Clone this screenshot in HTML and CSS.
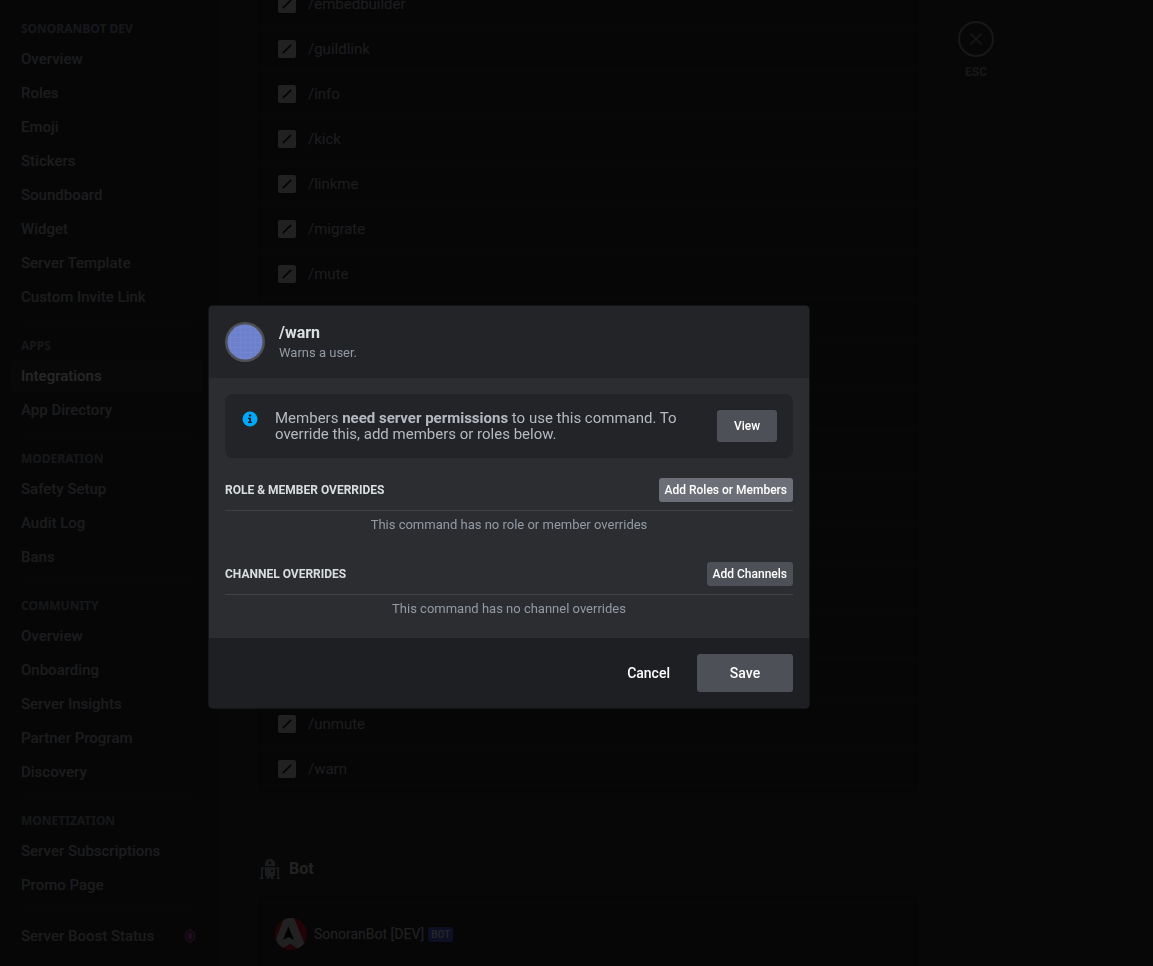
FILE: index.html
```html
<!DOCTYPE html>
<html lang="en">
<head>
<meta charset="utf-8">
<title>Server Settings</title>
<link rel="stylesheet" href="styles.css">
</head>
<body>
<svg class="sprite" aria-hidden="true">
  <symbol id="slash" viewBox="0 0 18 18">
    <rect width="18" height="18" rx="2" fill="#dbdee1"/>
    <path d="M4.8 13.2 13.2 4.8" stroke="#1e1f22" stroke-width="1.8"/>
  </symbol>
</svg>
<div class="app">
  <nav class="sidebar" aria-label="Server settings">
    <h2>SonoranBot Dev</h2>
    <ul>
      <li><a href="#">Overview</a></li>
      <li><a href="#">Roles</a></li>
      <li><a href="#">Emoji</a></li>
      <li><a href="#">Stickers</a></li>
      <li><a href="#">Soundboard</a></li>
      <li><a href="#">Widget</a></li>
      <li><a href="#">Server Template</a></li>
      <li><a href="#">Custom Invite Link</a></li>
    </ul>
    <hr>
    <h2>Apps</h2>
    <ul>
      <li><a href="#" class="active" aria-current="page">Integrations</a></li>
      <li><a href="#">App Directory</a></li>
    </ul>
    <hr>
    <h2>Moderation</h2>
    <ul>
      <li><a href="#">Safety Setup</a></li>
      <li><a href="#">Audit Log</a></li>
      <li><a href="#">Bans</a></li>
    </ul>
    <hr>
    <h2>Community</h2>
    <ul>
      <li><a href="#">Overview</a></li>
      <li><a href="#">Onboarding</a></li>
      <li><a href="#">Server Insights</a></li>
      <li><a href="#">Partner Program</a></li>
      <li><a href="#">Discovery</a></li>
    </ul>
    <hr>
    <h2>Monetization</h2>
    <ul>
      <li><a href="#">Server Subscriptions</a></li>
      <li><a href="#">Promo Page</a></li>
    </ul>
    <hr class="tight">
    <ul>
      <li><a href="#">Server Boost Status
        <svg width="10" height="14" viewBox="0 0 10 14" aria-hidden="true"><path d="M5 .8 9.3 4v6L5 13.2.7 10V4Z" fill="none" stroke="#e05ad8" stroke-width="1.1"/><path d="M5 3.2 7.5 5v4L5 10.8 2.5 9V5Z" fill="#e05ad8"/></svg>
      </a></li>
    </ul>
  </nav>
  <main class="content">
    <div class="column">
      <ul class="card commands">
        <li><svg><use href="#slash"/></svg>/embedbuilder</li>
        <li><svg><use href="#slash"/></svg>/guildlink</li>
        <li><svg><use href="#slash"/></svg>/info</li>
        <li><svg><use href="#slash"/></svg>/kick</li>
        <li><svg><use href="#slash"/></svg>/linkme</li>
        <li><svg><use href="#slash"/></svg>/migrate</li>
        <li><svg><use href="#slash"/></svg>/mute</li>
        <li></li><li></li><li></li><li></li><li></li><li></li><li></li><li></li><li></li>
        <li><svg><use href="#slash"/></svg>/unmute</li>
        <li><svg><use href="#slash"/></svg>/warn</li>
      </ul>
      <h3 class="section-title">
        <svg width="22" height="20" viewBox="0 0 22 20" aria-hidden="true" fill="#b5bac1"><path fill-rule="evenodd" d="M6 7V5a5 5 0 0 1 10 0v2ZM11 2.300a1.500 1.500 0 1 0 0 3 1.500 1.500 0 0 0 0-3Z"/><path fill-rule="evenodd" d="M6 8.200h10V17h-2v1l1 2H11.800v-2h-1.600v2H7l1-2v-1H6ZM12 11v2h2v-2Z"/><path d="M2 8.200h3.500v1.700H3.700V18L5 20H0l2-2ZM20 8.200h-3.500v1.700h1.800V18L17 20h5l-2-2Z"/></svg>
        Bot
      </h3>
      <div class="card bot">
        <svg width="32" height="32" viewBox="0 0 32 32" aria-hidden="true"><defs><clipPath id="disc"><circle cx="16" cy="16" r="16"/></clipPath></defs><g clip-path="url(#disc)"><rect width="32" height="32" fill="#e01c2c"/><path d="M9 0h10l11 27-5 5-9.500-6L6 31 0 24Z" fill="#dbdee1"/><path d="m13.500 8.500 5.500 13.500-5.500-3-5.500 2.700Z" fill="#111"/><path d="m15 26 9 6H6Z" fill="#e01c2c"/></g></svg>
        <span class="bot-name">SonoranBot [DEV]</span>
        <span class="tag">BOT</span>
      </div>
    </div>
    <div class="close">
      <button type="button" aria-labelledby="esc"><svg width="14" height="14" viewBox="0 0 14 14" aria-hidden="true"><path d="m1.500 1.500 11 11m0-11-11 11" stroke="#949ba4" stroke-width="1.600"/></svg></button>
      <span id="esc">ESC</span>
    </div>
  </main>
</div>
<div class="backdrop">
  <section class="modal" role="dialog" aria-modal="true" aria-labelledby="title">
    <header>
      <svg width="40" height="40" viewBox="0 0 40 40" aria-hidden="true"><defs><pattern id="grid" width="5" height="5" patternUnits="userSpaceOnUse"><path d="M0 .5h5M.5 0v5" stroke="#7b8dd8"/></pattern></defs><circle cx="20" cy="20" r="20" fill="#4e5056"/><circle cx="20" cy="20" r="17.500" fill="#6c80cb"/><circle cx="20" cy="20" r="17.500" fill="url(#grid)" opacity=".4"/></svg>
      <div>
        <h1 id="title">/warn</h1>
        <p>Warns a user.</p>
      </div>
    </header>
    <div class="modal-body">
      <div class="notice">
        <svg width="16" height="16" viewBox="0 0 16 16" aria-hidden="true"><circle cx="8" cy="8" r="7.500" fill="#00a8fc"/><circle cx="8" cy="4.500" r="1.200" fill="#232428"/><path d="M6 6.800h3v3.900h1V12H6v-1.300h1V8.100H6Z" fill="#232428"/></svg>
        <p>Members <strong>need server permissions</strong> to use this command. To override this, add members or roles below.</p>
        <button type="button" class="btn view">View</button>
      </div>
      <section class="overrides">
        <div class="overrides-head">
          <h2>Role &amp; Member Overrides</h2>
          <button type="button" class="btn small hover">Add Roles or Members</button>
        </div>
        <p>This command has no role or member overrides</p>
      </section>
      <section class="overrides">
        <div class="overrides-head">
          <h2>Channel Overrides</h2>
          <button type="button" class="btn small">Add Channels</button>
        </div>
        <p>This command has no channel overrides</p>
      </section>
    </div>
    <footer>
      <button type="button" class="btn link">Cancel</button>
      <button type="button" class="btn save">Save</button>
    </footer>
  </section>
</div>
</body>
</html>
```
FILE: styles.css
```css
* { box-sizing: border-box; }
body {
  margin: 0;
  overflow: hidden;
  background: #313338;
  color: #b5bac1;
  font: 400 15px/20px Roboto, "Noto Sans", sans-serif;
}
h1, h2, h3, p, ul { margin: 0; padding: 0; }
ul { list-style: none; }
button { font: inherit; cursor: pointer; }
.sprite { position: absolute; width: 0; height: 0; }

.app { display: flex; height: 100vh; overflow: hidden; }

.sidebar {
  flex: 0 0 218px;
  padding: 21px 15px 0 11px;
  background: #2b2d31;
}
.sidebar h2 {
  margin-bottom: 6px;
  padding: 0 10px;
  color: #949ba4;
  font: 700 12px/16px "Noto Sans", sans-serif;
  text-transform: uppercase;
}
.sidebar ul { display: flex; flex-direction: column; gap: 2px; }
.sidebar a {
  display: flex;
  align-items: center;
  justify-content: space-between;
  height: 32px;
  padding: 0 8px 0 10px;
  border-radius: 4px;
  color: #b5bac1;
  font-weight: 500;
  text-decoration: none;
}
.sidebar a.active { background: #363940; color: #fff; }
.sidebar hr {
  height: 1px;
  margin: 9px 10px 15px;
  border: 0;
  background: #35373d;
}
.sidebar hr.tight { margin-bottom: 9px; }

.content { display: flex; flex: 1; gap: 41px; padding-left: 41px; }
.column { flex: 0 1 658px; }
.card { border: 1px solid #1e1f22; border-radius: 5px; background: #2b2d31; }
.commands { margin-top: -20px; }
.commands li {
  display: flex;
  align-items: center;
  gap: 12px;
  height: 45px;
  padding-left: 18px;
  border-top: 1px solid #36383e;
}
.commands svg { width: 18px; height: 18px; }
.section-title {
  display: flex;
  align-items: center;
  gap: 8px;
  margin: 67px 0 17px;
  color: #dbdee1;
  font-size: 16px;
  line-height: 20px;
}
.bot {
  display: flex;
  align-items: center;
  height: 90px;
  padding: 0 15px 14px;
}
.bot-name { margin: 0 4px 0 7px; color: #dbdee1; font-size: 14px; }
.tag {
  padding: 0 3px;
  border-radius: 3px;
  background: #5865f2;
  color: #fff;
  font-size: 10px;
  font-weight: 500;
  line-height: 15px;
}
.close {
  display: flex;
  flex-direction: column;
  align-items: center;
  gap: 7px;
  padding-top: 21px;
  font-size: 12px;
  font-weight: 700;
  line-height: 16px;
  color: #949ba4;
}
.close button {
  display: grid;
  place-items: center;
  width: 36px;
  height: 36px;
  padding: 0;
  border: 2px solid #949ba4;
  border-radius: 50%;
  background: none;
}

.backdrop {
  position: fixed;
  inset: 0;
  display: grid;
  place-items: center;
  padding: 48px 135px 0 0;
  background: rgba(0, 0, 0, .85);
}
.modal {
  width: 600px;
  max-width: 100%;
  overflow: hidden;
  border-radius: 4px;
  background: #2b2d31;
  box-shadow: 0 0 0 1px rgba(30, 31, 34, .6), 0 2px 10px rgba(0, 0, 0, .2);
}
.modal header {
  display: flex;
  gap: 14px;
  height: 72px;
  padding: 16px;
  background: #232428;
}
.modal h1 { color: #dbdee1; font-size: 16px; font-weight: 700; line-height: 22px; }
.modal header p { color: #949ba4; font-size: 13px; line-height: 18px; }
.modal-body { padding: 16px 16px 15px; }
.notice {
  display: flex;
  align-items: center;
  padding: 16px;
  border-radius: 8px;
  background: #232428;
}
.notice svg { flex: none; align-self: flex-start; margin: 1px 17px 0 1px; }
.notice p { flex: 1; padding-right: 24px; line-height: 16px; }
.btn {
  border: 0;
  border-radius: 3px;
  background: #4e5058;
  color: #fff;
  font-size: 14px;
  font-weight: 500;
}
.view { width: 60px; height: 32px; font-size: 12px; }
.small { height: 24px; padding: 0 6px; font-size: 12px; }
.hover { background: #6d6f78; }
.overrides { margin-top: 20px; }
.overrides + .overrides { margin-top: 23px; }
.overrides-head {
  display: flex;
  align-items: center;
  justify-content: space-between;
  padding-bottom: 8px;
  border-bottom: 1px solid #3f4147;
}
.overrides h2 {
  color: #dbdee1;
  font-size: 12px;
  font-weight: 700;
  line-height: 16px;
  text-transform: uppercase;
}
.overrides p {
  padding: 5px 0;
  color: #949ba4;
  font-size: 13px;
  line-height: 18px;
  text-align: center;
}
.modal footer {
  display: flex;
  justify-content: flex-end;
  gap: 11px;
  padding: 16px;
  background: #1e1f22;
}
.link { padding: 0 16px; background: none; }
.save { width: 96px; height: 38px; }
```
